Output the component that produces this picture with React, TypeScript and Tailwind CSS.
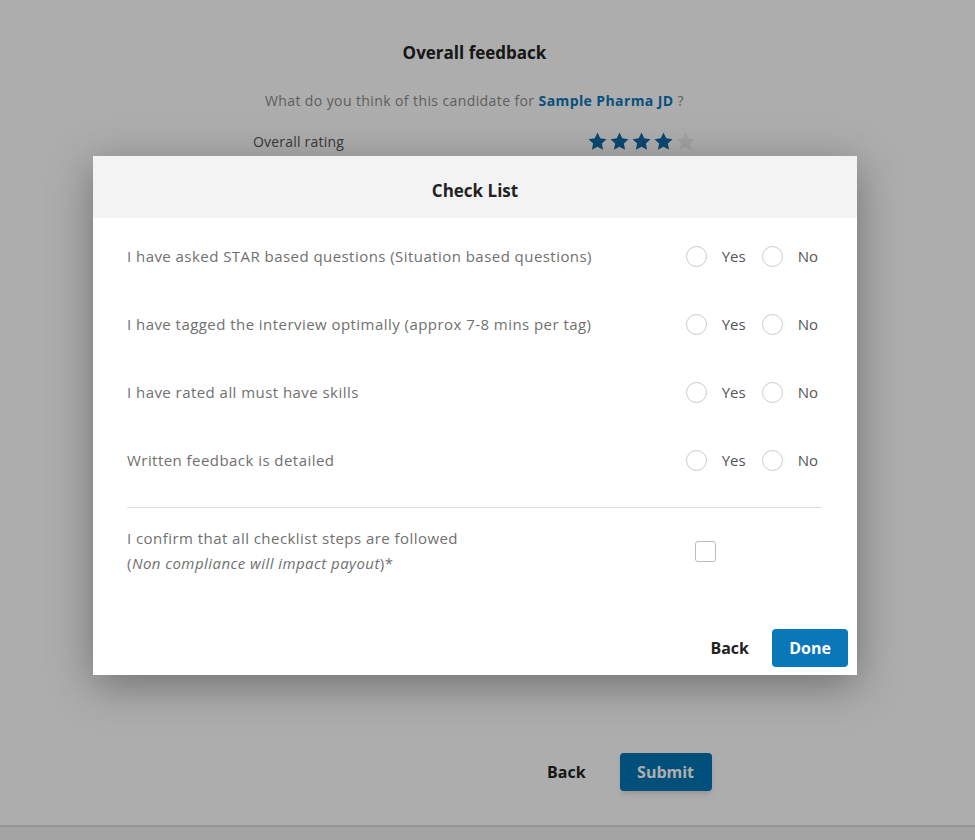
import { useState } from "react";

const questions = [
  "I have asked STAR based questions (Situation based questions)",
  "I have tagged the interview optimally (approx 7-8 mins per tag)",
  "I have rated all must have skills",
  "Written feedback is detailed",
];

function Star({ filled }: { filled: boolean }) {
  return (
    <svg viewBox="0 0 24 24" className="h-[21px] w-[21px]">
      <path
        d="M12 1.8l3.1 6.6 7.2.9-5.3 5 1.4 7.1L12 17.9l-6.4 3.5L7 14.3l-5.3-5 7.2-.9z"
        fill={filled ? "#0f6ba8" : "#ededed"}
      />
    </svg>
  );
}

function Radio({ label }: { label: string }) {
  return (
    <label className="flex items-center">
      <span className="h-[21px] w-[21px] rounded-full border border-[#c9c9c9] bg-white" />
      <span className="ml-[15px] text-[15px] text-[#555]">{label}</span>
    </label>
  );
}

export default function App() {
  const [confirmed, setConfirmed] = useState(false);
  return (
    <div
      className="relative h-[840px] w-full overflow-hidden bg-white"
      style={{ fontFamily: "'Open Sans', Lato, sans-serif" }}
    >
      {/* page behind the dialog */}
      <div className="ml-[253px] flex w-[443px] flex-col pt-[41px]">
        <h1 className="text-center text-[17px] font-bold leading-6 text-[#222]">Overall feedback</h1>
        <p className="mt-[24px] text-center text-[14px] leading-6 tracking-[0.4px] text-[#8c8c8c]">
          What do you think of this candidate for{" "}
          <span className="font-bold text-[#0b76b9]">Sample Pharma JD</span> ?
        </p>
        <div className="mt-[18px] flex items-center justify-between">
          <span className="text-[14px] tracking-[0.2px] text-[#555]">Overall rating</span>
          <div className="flex gap-px">
            {[1, 2, 3, 4, 5].map((n) => (
              <Star key={n} filled={n <= 4} />
            ))}
          </div>
        </div>
      </div>
      <div className="ml-[547px] mt-[601px] flex items-center gap-[34px]">
        <button className="text-[16px] font-bold text-[#222]">Back</button>
        <button className="h-[38px] w-[92px] rounded-[4px] bg-[#0077b6] text-[16px] font-bold text-white shadow-md">
          Submit
        </button>
      </div>
      <div className="absolute bottom-0 left-0 right-0 h-[15px] border-t-2 border-[#dcdcdc] bg-[#f2f2f2]" />

      {/* dim overlay */}
      <div className="absolute inset-0 bg-black/[0.32]" />

      {/* dialog */}
      <div className="absolute left-[93px] top-[156px] w-[764px] bg-white shadow-[0_10px_40px_rgba(0,0,0,0.35)]">
        <div className="flex h-[62px] items-center justify-center bg-[#f3f3f3] pt-[8px]">
          <h2 className="text-[17px] font-bold text-[#222]">Check List</h2>
        </div>
        <div className="pl-[34px] pr-[35px] pt-[4px]">
          {questions.map((q) => (
            <div key={q} className="flex h-[68px] items-center justify-between">
              <span className="text-[15px] tracking-[0.45px] text-[#707070]">{q}</span>
              <div className="flex items-center gap-[16px] pr-[4px]">
                <Radio label="Yes" />
                <Radio label="No" />
              </div>
            </div>
          ))}
          <div className="mt-[13px] border-t border-[#dedede]" />
          <div className="mt-[18px] flex items-center">
            <div className="w-[568px] text-[15px] leading-[25px] tracking-[0.45px] text-[#707070]">
              I confirm that all checklist steps are followed
              <br />(<i>Non compliance will impact payout</i>)*
            </div>
            <button
              onClick={() => setConfirmed(!confirmed)}
              className="h-[21px] w-[21px] rounded-[3px] border border-[#bcbcbc] bg-white"
              aria-pressed={confirmed}
            />
          </div>
        </div>
        <div className="mt-[53px] flex items-center justify-end gap-[23px] pb-[8px] pr-[9px]">
          <button className="text-[16px] font-bold text-[#222]">Back</button>
          <button className="h-[38px] w-[76px] rounded-[4px] bg-[#0a78b8] text-[16px] font-bold text-white">
            Done
          </button>
        </div>
      </div>
    </div>
  );
}
